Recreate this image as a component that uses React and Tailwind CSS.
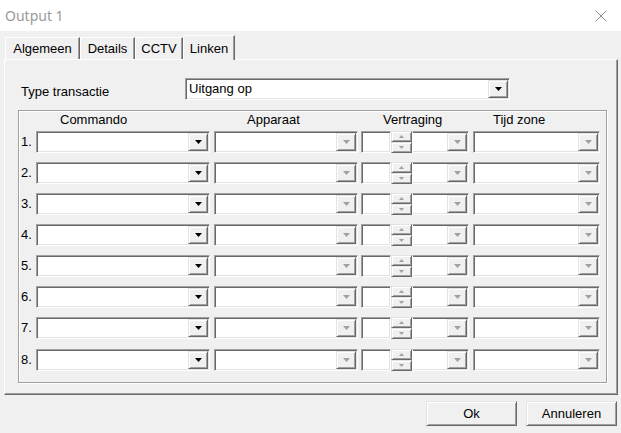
import React from 'react';

const font = { fontFamily: '"Liberation Sans", Arial, sans-serif' };

const raised =
  'border border-t-[#e3e3e3] border-l-[#e3e3e3] border-r-[#696969] border-b-[#696969] shadow-[inset_1px_1px_0_#fff,inset_-1px_-1px_0_#a0a0a0] bg-[#f0f0f0]';
const sunken =
  'border border-t-[#a0a0a0] border-l-[#a0a0a0] border-r-white border-b-white shadow-[inset_1px_1px_0_#696969,inset_-1px_-1px_0_#e3e3e3] bg-white';

function Arrow({ disabled, up }) {
  return (
    <svg width="7" height="4" viewBox="0 0 7 4">
      <polygon
        points={up ? '0,4 7,4 3.5,0' : '0,0 7,0 3.5,4'}
        fill={disabled ? '#a0a0a0' : '#000'}
      />
    </svg>
  );
}

function Combo({ width, disabled, value }) {
  return (
    <div className={`${sunken} h-[22px] p-[1px] flex`} style={{ width }}>
      <div className="flex-1 pl-[2px] text-[13px] leading-[18px] text-black truncate">{value}</div>
      <div className={`${raised} w-[20px] h-[18px] flex items-center justify-center`}>
        <Arrow disabled={disabled} />
      </div>
    </div>
  );
}

function Spin() {
  return (
    <div className="flex h-[22px]">
      <div className={`${sunken} w-[30px] h-[22px]`} />
      <div className="flex flex-col w-[21px]">
        <div className={`${raised} h-[11px] flex items-center justify-center`}>
          <svg width="5" height="3" viewBox="0 0 5 3">
            <polygon points="0,3 5,3 2.5,0" fill="#a0a0a0" />
          </svg>
        </div>
        <div className={`${raised} h-[11px] flex items-center justify-center`}>
          <svg width="5" height="3" viewBox="0 0 5 3">
            <polygon points="0,0 5,0 2.5,3" fill="#a0a0a0" />
          </svg>
        </div>
      </div>
      <div className="h-[22px] bg-white border border-t-[#a0a0a0] border-l-white border-r-white border-b-white shadow-[inset_0_1px_0_#696969,inset_-1px_-1px_0_#e3e3e3] p-[1px] flex w-[57px]">
        <div className="flex-1" />
        <div className={`${raised} w-[20px] h-[18px] flex items-center justify-center`}>
          <Arrow disabled />
        </div>
      </div>
    </div>
  );
}

function Tab({ label, width, selected }) {
  return (
    <div
      className={
        selected
          ? 'relative z-10 -mb-[1px] h-[25px] bg-[#f0f0f0] border-l border-t border-white border-r border-r-[#696969] shadow-[inset_-1px_0_0_#a0a0a0] rounded-tl-[2px] flex items-start justify-center pt-[3px] text-[13px] text-black'
          : 'h-[22px] bg-[#f0f0f0] border-l border-t border-white border-r border-r-[#696969] shadow-[inset_-1px_0_0_#a0a0a0] rounded-tl-[2px] flex items-center justify-center text-[13px] text-black'
      }
      style={{ width }}
    >
      {label}
    </div>
  );
}

export default function App() {
  const rows = [1, 2, 3, 4, 5, 6, 7, 8];
  return (
    <div className="w-[621px] h-[433px] bg-[#f0f0f0] flex flex-col overflow-hidden" style={font}>
      {/* Title bar */}
      <div className="h-[31px] bg-white flex items-center justify-between pl-[5px] pr-[14px] shrink-0">
        <span className="text-[14px] text-[#9a9a9a]" style={{ fontFamily: '"Noto Sans", "Open Sans", sans-serif' }}>
          Output 1
        </span>
        <svg width="12" height="12" viewBox="0 0 12 12">
          <line x1="0.5" y1="0.5" x2="11.5" y2="11.5" stroke="#8a8a8a" strokeWidth="1" />
          <line x1="11.5" y1="0.5" x2="0.5" y2="11.5" stroke="#8a8a8a" strokeWidth="1" />
        </svg>
      </div>

      <div className="px-[4px] pt-[4px]">
        {/* Tabs */}
        <div className="flex items-end h-[24px] pl-[1px]">
          <Tab label="Algemeen" width={75} />
          <Tab label="Details" width={55} />
          <Tab label="CCTV" width={48} />
          <Tab label="Linken" width={52} selected />
        </div>

        {/* Panel */}
        <div className="w-[614px] h-[336px] border-l border-t border-white border-r border-b border-r-[#696969] border-b-[#696969] shadow-[inset_-1px_-1px_0_#a0a0a0]">
          <div className="pt-[18px] flex items-center h-[40px]">
            <div className="w-[180px] pl-[16px] text-[13px] text-black pt-[6px]">Type transactie</div>
            <Combo width={325} value="Uitgang op" />
          </div>

          <div className="ml-[13px] mt-[10px] w-[589px] h-[273px] border border-[#a0a0a0] shadow-[1px_1px_0_#fff,inset_1px_1px_0_#fff]">
            <div className="flex h-[20px] pt-[1px] text-[13px] leading-[15px] text-black">
              <div className="w-[17px]" />
              <div className="w-[178px] pl-[24px]">Commando</div>
              <div className="w-[147px] pl-[33px]">Apparaat</div>
              <div className="w-[112px] pl-[22px]">Vertraging</div>
              <div className="pl-[20px]">Tijd zone</div>
            </div>
            <div className="flex flex-col gap-[9px]">
              {rows.map((n) => (
                <div key={n} className={`flex items-center h-[22px] ${n === 8 ? 'mt-[1px]' : ''}`}>
                  <div className="w-[17px] pl-[2px] text-[13px] text-black">{n}.</div>
                  <Combo width={174} />
                  <div className="w-[4px]" />
                  <Combo width={144} disabled />
                  <div className="w-[3px]" />
                  <Spin />
                  <div className="w-[4px]" />
                  <Combo width={127} disabled />
                </div>
              ))}
            </div>
          </div>
        </div>

        {/* Buttons */}
        <div className="flex justify-end gap-[9px] mt-[6px] pr-[0px]">
          <button className={`${raised} w-[91px] h-[25px] text-[13px] text-black`}>Ok</button>
          <button className={`${raised} w-[91px] h-[25px] text-[13px] text-black`}>Annuleren</button>
        </div>
      </div>
    </div>
  );
}
